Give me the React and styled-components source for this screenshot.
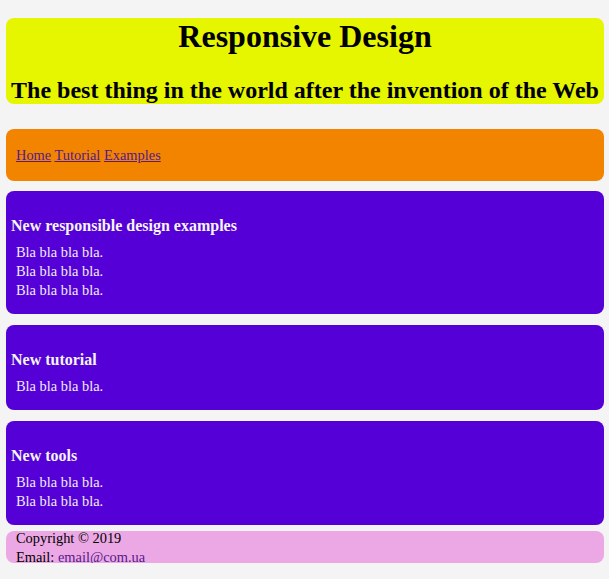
import React from 'react'
import styled, { createGlobalStyle } from 'styled-components'

const GlobalStyle = createGlobalStyle`
    body {
        margin: 0;
        background: #f4f4f4;
        font-family: "Liberation Serif", "Times New Roman", serif;
        font-size: 14.4px;
    }
`

const sections = [
    { title: 'New responsible design examples', lines: 3 },
    { title: 'New tutorial', lines: 1 },
    { title: 'New tools', lines: 2 },
]

const App = () => {
    return (
        <Page>
            <GlobalStyle />
            <Header>
                <Title>Responsive Design</Title>
                <Subtitle>The best thing in the world after the invention of the Web</Subtitle>
            </Header>

            <Nav>
                <NavLink href="#home">Home</NavLink> <NavLink href="#tutorial">Tutorial</NavLink>{' '}
                <NavLink href="#examples">Examples</NavLink>
            </Nav>

            {sections.map(section => (
                <Card key={section.title}>
                    <CardTitle>{section.title}</CardTitle>
                    <CardText>
                        {Array.from({ length: section.lines }).map((_, i) => (
                            <div key={i}>Bla bla bla bla.</div>
                        ))}
                    </CardText>
                </Card>
            ))}

            <Footer>
                <FooterText>
                    <div>Copyright © 2019</div>
                    <div>
                        Email: <NavLink href="#mail">email@com.ua</NavLink>
                    </div>
                </FooterText>
            </Footer>
        </Page>
    )
}

const Page = styled.div`
    display: flex;
    flex-direction: column;
    margin: 0 5px 0 6px;
    padding-top: 18px;
`

const Header = styled.header`
    background: #e6f500;
    border-radius: 8px;
    text-align: center;
    color: #000;
`

const Title = styled.h1`
    margin: 0;
    font-size: 32px;
    font-weight: bold;
`

const Subtitle = styled.h2`
    margin: 21.5px 0 0;
    font-size: 24px;
    font-weight: bold;
`

const Nav = styled.nav`
    margin-top: 25px;
    background: #f38400;
    border-radius: 8px;
    padding: 17px 10px 16px;
    line-height: 19px;
`

const NavLink = styled.a`
    color: #551a8b;
    text-decoration: underline;
`

const Card = styled.section`
    margin-top: 10px;
    background: #5500d6;
    border-radius: 8px;
    padding: 5px;
    color: #f0ecfa;

    & + & {
        margin-top: 11px;
    }
`

const CardTitle = styled.h3`
    margin: 21px 0 8px;
    font-size: 16px;
    line-height: 18px;
    font-weight: bold;
    color: #f4f4f4;
`

const CardText = styled.div`
    padding: 0 5px 9px;
    line-height: 19px;
`

const Footer = styled.footer`
    margin-top: 6px;
    height: 32px;
    background: #eca8e4;
    border-radius: 8px;
    padding: 0 10px;
`

const FooterText = styled.div`
    margin-top: -2px;
    line-height: 19px;
    color: #000;
`

export default App
